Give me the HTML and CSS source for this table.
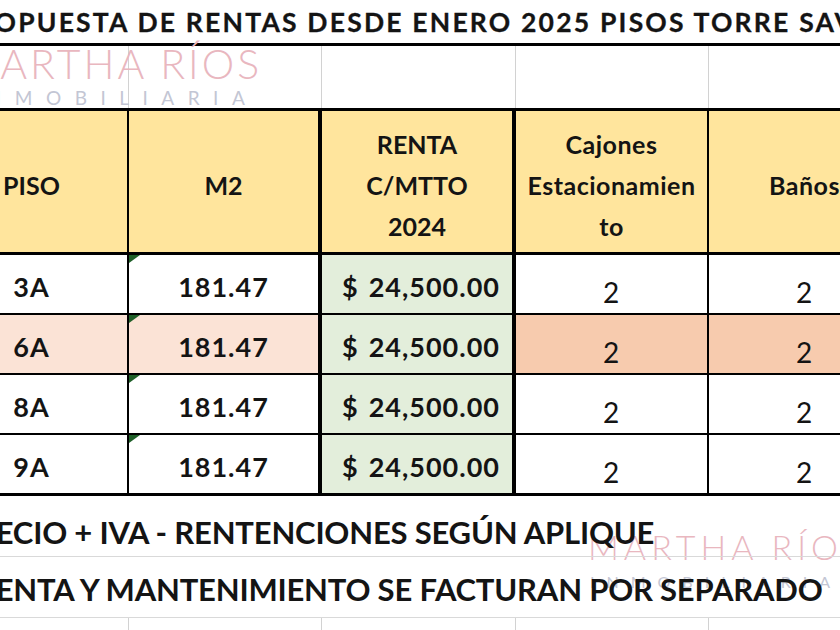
FILE: index.html
```html
<!DOCTYPE html>
<html lang="es">
<head>
<meta charset="utf-8">
<title>Propuesta de rentas Torre Savia</title>
<link rel="stylesheet" href="styles.css">
</head>
<body>
<div class="sheet">
  <div class="title-row"><span class="title">PROPUESTA DE RENTAS DESDE ENERO 2025 PISOS TORRE SAVIA</span></div>

  <div class="logo-row">
    <div class="gcell"></div><div class="gcell"></div><div class="gcell"></div><div class="gcell"></div><div class="gcell"></div>
    <div class="brand brand--top"><span class="brand-name">MARTHA RÍOS</span><span class="brand-sub">INMOBILIARIA</span></div>
  </div>

  <div class="grid">
    <div class="cell hd col1">PISO</div>
    <div class="cell hd col2">M2</div>
    <div class="cell hd col3">RENTA<br>C/MTTO<br>2024</div>
    <div class="cell hd col4 hd--sm">Cajones<br>Estacionamien<br>to</div>
    <div class="cell hd col5 hd--sm">Baños</div>

    <div class="cell bd col1">3A</div>
    <div class="cell bd col2 flag">181.47</div>
    <div class="cell bd col3 money"><span>$</span><span>24,500.00</span></div>
    <div class="cell bd col4 count">2</div>
    <div class="cell bd col5 count">2</div>

    <div class="cell bd col1 pale">6A</div>
    <div class="cell bd col2 flag pale">181.47</div>
    <div class="cell bd col3 money"><span>$</span><span>24,500.00</span></div>
    <div class="cell bd col4 count peach">2</div>
    <div class="cell bd col5 count peach">2</div>

    <div class="cell bd col1">8A</div>
    <div class="cell bd col2 flag">181.47</div>
    <div class="cell bd col3 money"><span>$</span><span>24,500.00</span></div>
    <div class="cell bd col4 count">2</div>
    <div class="cell bd col5 count">2</div>

    <div class="cell bd col1 end">9A</div>
    <div class="cell bd col2 flag end">181.47</div>
    <div class="cell bd col3 money end"><span>$</span><span>24,500.00</span></div>
    <div class="cell bd col4 count end">2</div>
    <div class="cell bd col5 count end">2</div>
  </div>

  <div class="notes">
    <div class="brand brand--bottom"><span class="brand-name">MARTHA RÍOS</span><span class="brand-sub">INMOBILIARIA</span></div>
    <div class="note-row note-row--first"><span class="note note--a">PRECIO + IVA - RENTENCIONES SEGÚN APLIQUE</span></div>
    <div class="note-row note-row--second"><span class="note note--b">RENTA Y MANTENIMIENTO SE FACTURAN POR SEPARADO</span></div>
    <div class="gridrow">
      <div class="gcell"></div><div class="gcell"></div><div class="gcell"></div><div class="gcell"></div><div class="gcell"></div>
    </div>
  </div>
</div>
</body>
</html>
```

FILE: styles.css
```css
html, body {
  margin: 0;
  padding: 0;
  background: #ffffff;
}

body {
  width: 840px;
  height: 630px;
  overflow: hidden;
  font-family: Lato, "Open Sans", sans-serif;
  color: #141414;
}

.sheet {
  width: 966px;
  margin-left: -64px;
}

/* ---------- title ---------- */
.title-row {
  box-sizing: border-box;
  height: 46px;
  border-bottom: 3px solid #000;
  white-space: nowrap;
  overflow: hidden;
}

.title {
  display: block;
  padding-left: 21px;
  padding-top: 2px;
  font-weight: 700;
  font-size: 26.5px;
  line-height: 41px;
  letter-spacing: 2.2px;
  -webkit-text-stroke: 0.3px #141414;
}

/* ---------- spreadsheet gridlines ---------- */
.logo-row,
.gridrow {
  position: relative;
  display: grid;
  grid-template-columns: 193px 193px 194px 193px 193px;
}

.logo-row {
  height: 62px;
}

.gridrow {
  height: 12px;
}

.gcell {
  border-right: 1px solid #d2d2d2;
}

/* ---------- watermark ---------- */
.brand {
  position: absolute;
  display: flex;
  flex-direction: column;
  align-items: flex-start;
  white-space: nowrap;
  pointer-events: none;
}

.brand-name {
  font-weight: 300;
  color: #e9b7bf;
  letter-spacing: 3px;
}

.brand-sub {
  font-weight: 400;
  color: #c3c6d4;
}

.brand--top {
  left: 24px;
  top: -5px;
}

.brand--top .brand-name {
  font-size: 41px;
  line-height: 46px;
}

.brand--top .brand-sub {
  font-size: 19px;
  line-height: 22px;
  letter-spacing: 13.5px;
  padding-left: 8px;
}

.brand--bottom {
  left: 652px;
  top: 31px;
  z-index: 0;
}

.brand--bottom .brand-name {
  font-size: 34px;
  line-height: 40px;
  letter-spacing: 5px;
}

.brand--bottom .brand-sub {
  font-size: 16px;
  line-height: 18px;
  letter-spacing: 12px;
  padding-left: 2px;
  padding-top: 6px;
}

/* ---------- table ---------- */
.grid {
  display: grid;
  grid-template-columns: 193px 193px 194px 193px 193px;
  grid-template-rows: 147px 60px 60px 60px 61px;
}

.cell {
  box-sizing: border-box;
  position: relative;
  display: flex;
  align-items: center;
  justify-content: center;
  text-align: center;
}

.col1 { border-right: 2px solid #000; }
.col2 { border-right: 4px solid #000; }
.col3 { border-right: 4px solid #000; }
.col4 { border-right: 2px solid #000; }
.col5 { border-right: 2px solid #000; }

.hd {
  background: #ffe59d;
  border-top: 3px solid #000;
  border-bottom: 3px solid #000;
  font-weight: 700;
  font-size: 25px;
  line-height: 41px;
  padding-top: 7px;
}

.hd--sm {
  letter-spacing: 0.5px;
}

.bd {
  border-bottom: 2px solid #000;
  font-weight: 700;
  font-size: 27px;
  letter-spacing: 1px;
  padding-top: 5px;
}

.bd.col3 {
  background: #e3eedb;
}

.pale {
  background: #fbe3d6;
}

.peach {
  background: #f7cbae;
}

.end {
  border-bottom-width: 3px;
}

.money {
  justify-content: space-between;
  padding-left: 20px;
  padding-right: 12px;
}

.count {
  font-weight: 400;
  font-size: 28px;
  padding-top: 16px;
}

/* "number stored as text" indicator */
.flag::before {
  content: "";
  position: absolute;
  left: 0;
  top: 0;
  border-top: 8px solid #1f5f28;
  border-right: 11px solid transparent;
}

/* ---------- notes ---------- */
.notes {
  position: relative;
}

.note-row {
  position: relative;
  z-index: 1;
  box-sizing: border-box;
  height: 61px;
  border-bottom: 1px solid #d9d9d9;
  white-space: nowrap;
}

.note {
  display: block;
  font-weight: 700;
  font-size: 31px;
  line-height: 52px;
  letter-spacing: -0.2px;
}

.note--a {
  padding-top: 10px;
  padding-left: 21px;
}

.note--b {
  padding-top: 6px;
  padding-left: 40px;
}
```
